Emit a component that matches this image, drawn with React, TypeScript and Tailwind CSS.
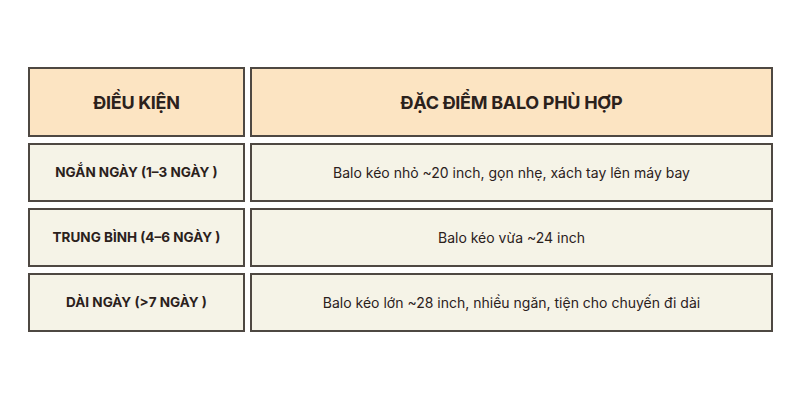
const rows = [
  ["NGẮN NGÀY (1–3 NGÀY )", "Balo kéo nhỏ ~20 inch, gọn nhẹ, xách tay lên máy bay"],
  ["TRUNG BÌNH (4–6 NGÀY )", "Balo kéo vừa ~24 inch"],
  ["DÀI NGÀY (>7 NGÀY )", "Balo kéo lớn ~28 inch, nhiều ngăn, tiện cho chuyến đi dài"],
];

export default function App() {
  return (
    <div className="w-[800px] h-[400px] bg-white pl-[28px] pt-[67px] font-['Inter',sans-serif] text-[#2b211c]">
      <div className="grid grid-cols-[217px_523px] gap-x-[5px] gap-y-[6px]">
        <div className="h-[70px] flex items-center justify-center bg-[#fce4c2] border-2 border-[#4e4842] text-[18px] font-bold tracking-[-0.3px]">
          ĐIỀU KIỆN
        </div>
        <div className="h-[70px] flex items-center justify-center bg-[#fce4c2] border-2 border-[#4e4842] text-[18px] font-bold tracking-[-0.3px]">
          ĐẶC ĐIỂM BALO PHÙ HỢP
        </div>
        {rows.map(([cond, desc]) => (
          <div key={cond} className="contents">
            <div className="h-[59px] flex items-center justify-center bg-[#f5f3e7] border-2 border-[#4e4842] text-[13.5px] font-bold">
              {cond}
            </div>
            <div className="h-[59px] flex items-center justify-center bg-[#f5f3e7] border-2 border-[#4e4842] text-[14px]">
              {desc}
            </div>
          </div>
        ))}
      </div>
    </div>
  );
}
